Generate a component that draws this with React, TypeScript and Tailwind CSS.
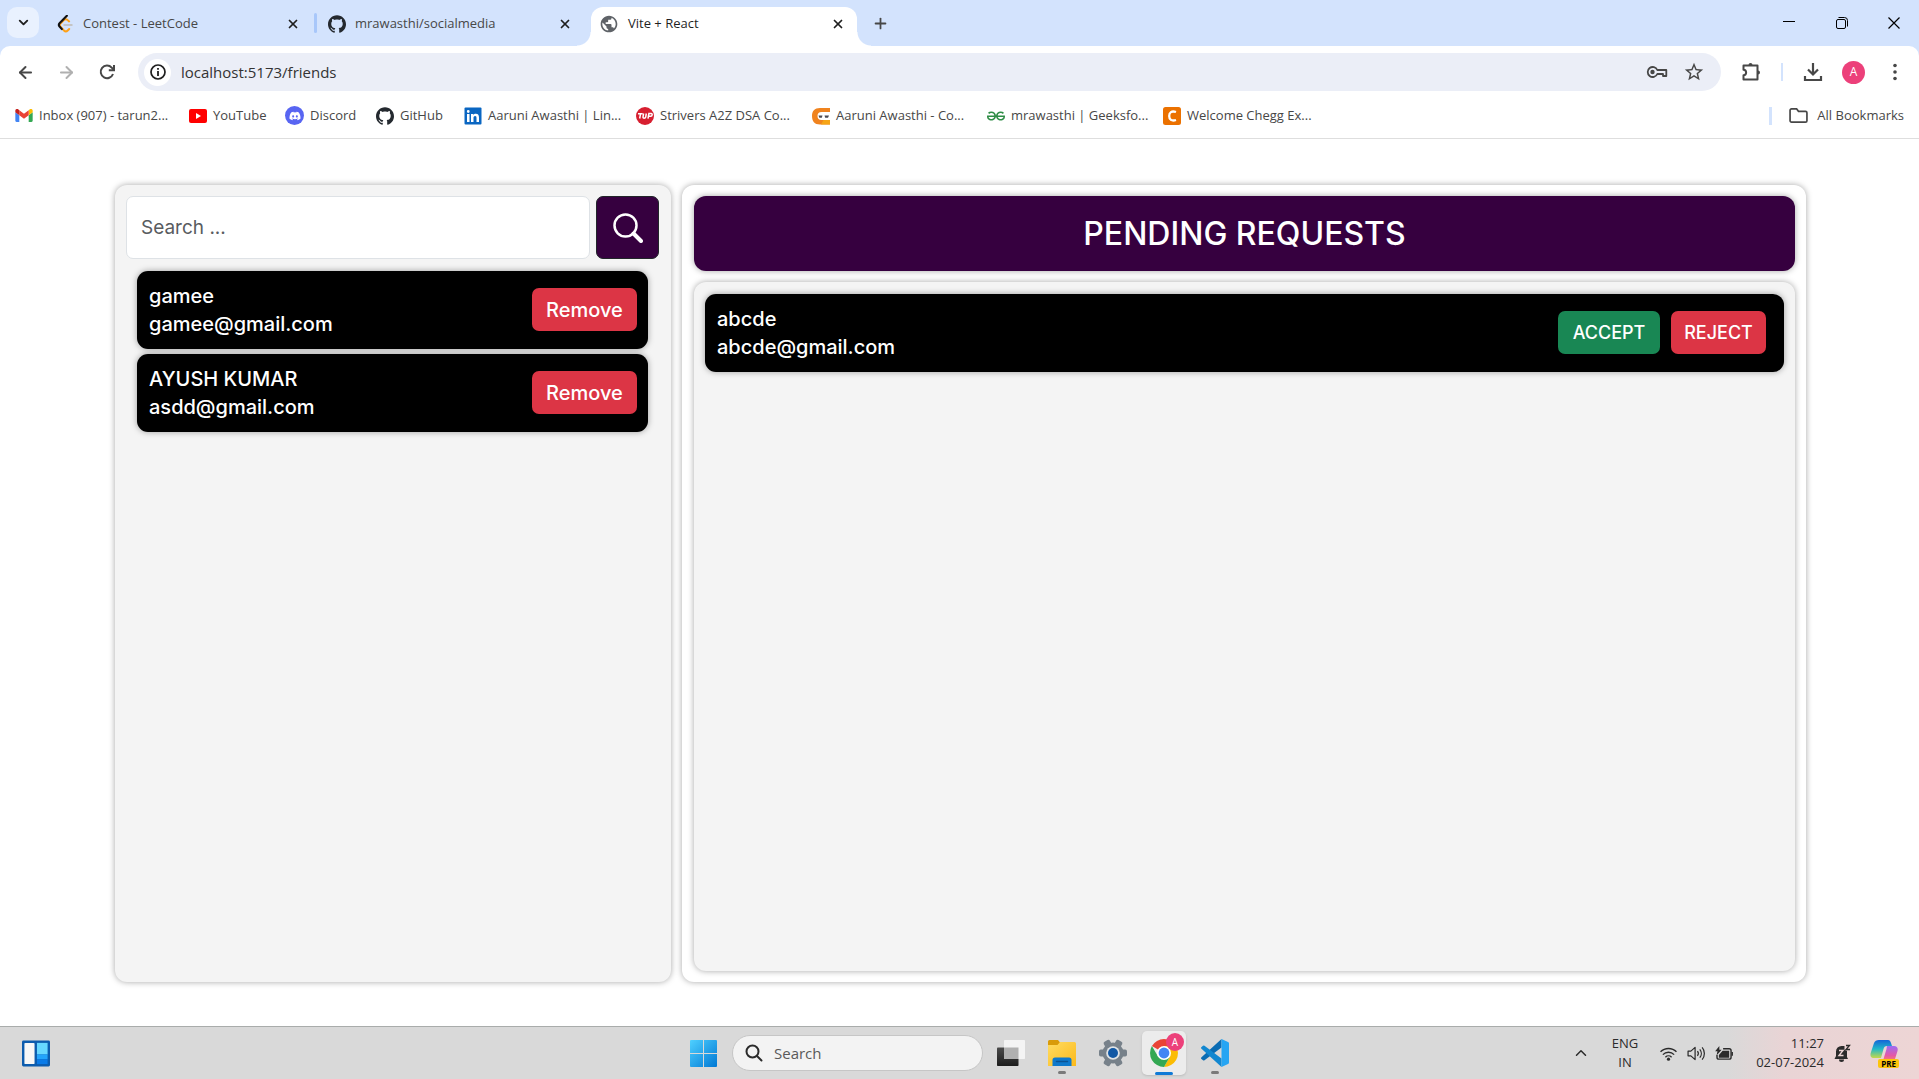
import type { ReactNode } from "react";
import { SiGithub, SiGeeksforgeeks } from "react-icons/si";
import { FaDiscord } from "react-icons/fa";
import { MdPublic, MdStarBorder } from "react-icons/md";
import { ArrowLeft, ArrowRight, ChevronDown, ChevronUp, Plus, X } from "lucide-react";

const uiFont = 'font-["Open_Sans","Noto_Sans",sans-serif]';

function LeetCodeIcon() {
  return (
    <svg viewBox="0 0 24 24" className="size-[18px]" aria-hidden="true">
      <path d="M17.5 8.6 15.600 6.800a3.600 3.600 0 0 0-5 0L6 11.400a3 3 0 0 0 0 4.200l4.600 5a3.600 3.600 0 0 0 5 0l2-2" fill="none" stroke="#ffa116" strokeWidth="2.600" strokeLinecap="round" />
      <path d="M14.500 1 5 10.800a3.600 3.600 0 0 0 0 5l2.800 3" fill="none" stroke="#111" strokeWidth="2.800" strokeLinecap="round" />
      <path d="M11 13.300h10" stroke="#c4c4c4" strokeWidth="2.600" strokeLinecap="round" />
    </svg>
  );
}

function GmailIcon() {
  return (
    <svg viewBox="0 0 24 18" className="h-[13px] w-[18px]" aria-hidden="true">
      <path d="M1.600 18H5.500V8.600L0 4.500v11.900C0 17.300.700 18 1.600 18z" fill="#4285f4" />
      <path d="M18.500 18h3.900c.9 0 1.600-.7 1.600-1.600V4.500l-5.500 4.100z" fill="#34a853" />
      <path d="M18.500 1.600v7L24 4.500V2.300c0-2-2.300-3.200-3.900-2z" fill="#fbbc04" />
      <path d="M5.500 8.600v-7L12 6.500l6.500-4.900v7L12 13.500z" fill="#ea4335" />
      <path d="M0 2.300v2.200l5.500 4.100v-7L3.900.4C2.300-.8 0 .3 0 2.300z" fill="#c5221f" />
    </svg>
  );
}

function YouTubeIcon() {
  return (
    <svg viewBox="0 0 18 14" className="h-[14px] w-[18px]" aria-hidden="true">
      <rect width="18" height="14" rx="2" fill="#f00" />
      <path d="M7 4v6l5-3z" fill="#fff" />
    </svg>
  );
}

function DiscordIcon() {
  return (
    <span className="flex size-[19px] items-center justify-center rounded-full bg-[#5865f2]">
      <FaDiscord className="size-[12px] text-white" />
    </span>
  );
}

function LinkedInIcon() {
  return (
    <svg viewBox="0 0 18 18" className="size-[18px]" aria-hidden="true">
      <rect x=".5" y=".5" width="17" height="17" rx="1" fill="#0a66c2" />
      <path d="M3 7h2.500v8H3zM4.250 3.100a1.400 1.400 0 1 1 0 2.800 1.400 1.400 0 0 1 0-2.800zM7 7h2.300v1.100C9.800 7.300 10.700 6.800 11.800 6.800c2.500 0 3.200 1.500 3.200 3.700V15h-2.500v-4c0-1.200-.2-2.100-1.400-2.100-1.300 0-1.600 1-1.600 2.100v4H7z" fill="#fff" />
    </svg>
  );
}

function TufIcon() {
  return (
    <svg viewBox="0 0 18 18" className="size-[18px]" aria-hidden="true">
      <circle cx="9" cy="9" r="9" fill="#d71f30" />
      <path d="M2 6.800h4.600M4.500 6.800 3.700 11.500M7.600 6.500 7 10c-.2 1.500 2.400 1.500 2.700 0l.6-3.500M12 11.700l.9-5.200h2.300c1.500 0 1.200 2.700-.4 2.700h-2" fill="none" stroke="#fff" strokeWidth="1.500" />
    </svg>
  );
}

function CodingNinjasIcon() {
  return (
    <svg viewBox="0 0 18 18" className="size-[18px]" aria-hidden="true">
      <path d="M18 1v4H9.500C7 5 5.500 6.500 5.500 9s1.500 4 4 4h8.500v4.500H8C2.500 17.500 0 14 0 9s2.500-8 8-8z" fill="#f0831e" />
      <path d="M18 13v4.500H9L11.500 13z" fill="#f6a516" />
      <path d="M6.500 8.500h4l-.7 2.200H7.300zM12.500 8.500H17l-1 2.200h-2.800z" fill="#4b4b55" />
    </svg>
  );
}

function CheggIcon() {
  return (
    <svg viewBox="0 0 18 18" className="size-[18px]" aria-hidden="true">
      <rect width="18" height="18" rx="2.500" fill="#eb7100" />
      <path d="M13 5C8.500 3.500 6.200 5.500 6.200 9s2.300 5.500 6.800 4" fill="none" stroke="#fff" strokeWidth="2.300" />
    </svg>
  );
}

type Bookmark = { label: string; icon: ReactNode; width: string };

const bookmarks: Bookmark[] = [
  { label: "Inbox (907) - tarun2...", icon: <GmailIcon />, width: "w-[174px]" },
  { label: "YouTube", icon: <YouTubeIcon />, width: "w-[96px]" },
  { label: "Discord", icon: <DiscordIcon />, width: "w-[91px]" },
  { label: "GitHub", icon: <SiGithub className="size-[18px] text-[#24292f]" />, width: "w-[88px]" },
  { label: "Aaruni Awasthi | Lin...", icon: <LinkedInIcon />, width: "w-[172px]" },
  { label: "Strivers A2Z DSA Co...", icon: <TufIcon />, width: "w-[176px]" },
  { label: "Aaruni Awasthi - Co...", icon: <CodingNinjasIcon />, width: "w-[175px]" },
  { label: "mrawasthi | Geeksfo...", icon: <SiGeeksforgeeks className="size-[18px] text-[#2f8d46]" />, width: "w-[176px]" },
  { label: "Welcome Chegg Ex...", icon: <CheggIcon />, width: "w-[175px]" },
];

function Tab({ title, icon, active = false }: { title: string; icon: ReactNode; active?: boolean }) {
  return (
    <div
      className={
        active
          ? "relative flex h-[39px] w-[266px] items-center rounded-t-[12px] bg-white pr-[12px] pb-[6px] pl-[8px]"
          : "flex h-[39px] w-[244px] items-center pb-[6px]"
      }
    >
      {active && (
        <>
          <span className="absolute bottom-0 -left-[14px] size-[14px] bg-[radial-gradient(circle_at_0_0,transparent_13px,white_14px)]" />
          <span className="absolute -right-[14px] bottom-0 size-[14px] bg-[radial-gradient(circle_at_100%_0,transparent_13px,white_14px)]" />
        </>
      )}
      {icon}
      <span className={active ? "ml-[9px] flex-1 text-[13px] text-[#1f1f1f]" : "ml-[9px] flex-1 text-[13px] text-[#474747]"}>{title}</span>
      <button type="button" aria-label={`Close ${title}`} className="flex size-[14px] items-center justify-center text-[#1f1f1f]">
        <X className="size-[14px]" strokeWidth={3} />
      </button>
    </div>
  );
}

function TabStrip() {
  return (
    <header className="flex h-[46px] items-end bg-[#d3e3fd] pl-[7px]">
      <button type="button" aria-label="Search tabs" className="mb-[8px] flex h-[31px] w-[32px] items-center justify-center rounded-[10px] bg-[#e9f1fe] text-[#1f1f1f]">
        <ChevronDown className="size-[15px]" strokeWidth={3} />
      </button>
      <div className="ml-[17px] flex w-[535px] items-end">
        <div className="flex w-[272px] items-center">
          <Tab title="Contest - LeetCode" icon={<LeetCodeIcon />} />
          <span className="mr-[11px] mb-[7px] ml-auto h-[20px] w-[3px] rounded bg-[#a8c7fa]" />
        </div>
        <Tab title="mrawasthi/socialmedia" icon={<SiGithub className="size-[18px] text-[#24292f]" />} />
      </div>
      <Tab title="Vite + React" icon={<MdPublic className="size-[20px] text-[#5f6368]" />} active />
      <button type="button" aria-label="New tab" className="mb-[14px] ml-[15px] text-[#474747]">
        <Plus className="size-[17px]" strokeWidth={2.500} />
      </button>
      <div className="mb-[8px] ml-auto flex text-black">
        <button type="button" aria-label="Minimize" className="flex h-[30px] w-[53px] items-center justify-center">
          <svg viewBox="0 0 12 12" className="size-[12px]"><path d="M0 4.500h12" stroke="currentColor" /></svg>
        </button>
        <button type="button" aria-label="Restore" className="flex h-[30px] w-[53px] items-center justify-center">
          <svg viewBox="0 0 12 12" className="size-[12px]" fill="none" stroke="currentColor"><rect x=".5" y="2.500" width="9" height="9" rx="1.500" /><path d="M2.500.5h6a3 3 0 0 1 3 3v6" /></svg>
        </button>
        <button type="button" aria-label="Close window" className="flex h-[30px] w-[51px] items-center justify-center">
          <svg viewBox="0 0 12 12" className="size-[12px]"><path d="m.5.5 11 11m0-11-11 11" stroke="currentColor" strokeWidth="1.200" /></svg>
        </button>
      </div>
    </header>
  );
}

function Toolbar() {
  return (
    <div className="bg-[#d3e3fd]">
      <div className="flex h-[52px] items-center rounded-t-[10px] bg-white pr-[15px] pl-[16px] text-[#474747]">
        <button type="button" aria-label="Back" className="w-[41px]"><ArrowLeft className="size-[19px]" strokeWidth={2.500} /></button>
        <button type="button" aria-label="Forward" className="w-[41px] text-[#b0b0b0]"><ArrowRight className="size-[19px]" strokeWidth={2.500} /></button>
        <button type="button" aria-label="Reload" className="w-[40px]">
          <svg viewBox="0 0 18 18" className="size-[18px]" fill="none" stroke="currentColor" strokeWidth="2"><path d="M15 11a6.300 6.300 0 1 1-1.300-6.400L16 7" /><path d="M16 2v5.300h-5.200" /></svg>
        </button>
        <div className="flex h-[38px] flex-1 items-center rounded-full bg-[#ebeef7] pr-[16px] pl-[6px]">
          <button type="button" aria-label="View site information" className="flex size-[27px] items-center justify-center rounded-full bg-white text-[#1f1f1f]">
            <svg viewBox="0 0 16 16" className="size-[16px]" fill="none" stroke="currentColor" strokeWidth="1.700"><circle cx="8" cy="8" r="7" /><path d="M8 7v5M8 4v1.800" strokeWidth="1.800" /></svg>
          </button>
          <input aria-label="Address" defaultValue="localhost:5173/friends" className="ml-[10px] min-w-0 flex-1 bg-transparent text-[15px] text-[#333] outline-none" />
          <button type="button" aria-label="Passwords">
            <svg viewBox="0 0 22 14" className="h-[14px] w-[22px]" fill="none" stroke="currentColor" strokeWidth="1.800"><path d="M11.300 5h9v6h-3.300V9h-5.700A5 5 0 1 1 11.300 5z" strokeLinejoin="round" /><circle cx="6.500" cy="7" r="2.200" fill="currentColor" stroke="none" /></svg>
          </button>
          <button type="button" aria-label="Bookmark this page" className="ml-[15px]"><MdStarBorder className="size-[22px]" /></button>
        </div>
        <button type="button" aria-label="Extensions" className="ml-[19px]">
          <svg viewBox="0 0 22 22" className="size-[22px]" fill="none" stroke="currentColor" strokeWidth="2"><path d="M3.500 4.500h14v14h-14v-4.200c3.500-.2 3.500-5.400 0-5.600z" strokeLinejoin="round" /><path d="M8.500 4a2 2 0 0 1 4 0zM18 9.500a2 2 0 0 1 0 4z" fill="currentColor" stroke="none" /></svg>
        </button>
        <span className="ml-[19px] h-[18px] w-[2px] bg-[#d3e3fd]" />
        <button type="button" aria-label="Downloads" className="ml-[20px]">
          <svg viewBox="0 0 20 20" className="size-[20px]" fill="none" stroke="currentColor" strokeWidth="2.200"><path d="M10 1v11M5 7.500l5 5 5-5M2 14v4h16v-4" /></svg>
        </button>
        <button type="button" aria-label="Profile" className="ml-[19px] flex size-[23px] items-center justify-center rounded-full bg-[#ec407a] text-[12px] text-white">A</button>
        <button type="button" aria-label="Menu" className="ml-[21px]">
          <svg viewBox="0 0 18 18" className="size-[18px]" fill="currentColor"><circle cx="9" cy="2.500" r="1.800" /><circle cx="9" cy="9" r="1.800" /><circle cx="9" cy="15.500" r="1.800" /></svg>
        </button>
      </div>
    </div>
  );
}

function BookmarksBar() {
  return (
    <nav aria-label="Bookmarks" className="flex h-[41px] items-center border-b border-[#dedede] bg-white pr-[15px] pb-[5px] pl-[15px] text-[13px] text-[#474747]">
      {bookmarks.map((b) => (
        <a key={b.label} href="#" className={`flex items-center gap-[6px] whitespace-nowrap ${b.width}`}>
          {b.icon}
          {b.label}
        </a>
      ))}
      <span className="mr-[17px] ml-auto h-[18px] w-[3px] bg-[#d3e3fd]" />
      <a href="#" className="flex items-center gap-[9px]">
        <svg viewBox="0 0 20 16" className="h-[15px] w-[19px]" fill="none" stroke="currentColor" strokeWidth="1.800"><path d="M1 2.500A1.500 1.500 0 0 1 2.500 1H8l2 2.500h7.500A1.500 1.500 0 0 1 19 5v8.500a1.500 1.500 0 0 1-1.500 1.500h-15A1.500 1.500 0 0 1 1 13.500z" /></svg>
        All Bookmarks
      </a>
    </nav>
  );
}

const panelShadow = "shadow-[0_0_6px_rgba(0,0,0,0.35)]";

function PersonCard({ name, email, children }: { name: string; email: string; children: ReactNode }) {
  return (
    <li className={`flex h-[78px] items-center justify-between rounded-[11px] bg-black pb-[1px] pl-[12px] ${panelShadow}`}>
      <div className="text-[20px] leading-[28px] font-medium text-white">
        <p>{name}</p>
        <p>{email}</p>
      </div>
      {children}
    </li>
  );
}

const friends = [
  { name: "gamee", email: "gamee@gmail.com" },
  { name: "AYUSH KUMAR", email: "asdd@gmail.com" },
];

function FriendsPage() {
  return (
    <main className='grid flex-1 grid-cols-[556fr_1124fr] gap-[11px] bg-white pt-[46px] pr-[113px] pb-[44px] pl-[115px] font-["Inter",sans-serif]'>
      <section className={`rounded-[12px] bg-[#f4f4f4] py-[11px] pr-[12px] pl-[11px] ${panelShadow}`}>
        <form className="flex gap-[6px]">
          <input aria-label="Search friends" placeholder="Search ..." className="h-[63px] min-w-0 flex-1 rounded-[7px] border border-[#dee2e6] bg-white px-[14px] text-[19px] outline-none placeholder:text-[#595c5f]" />
          <button type="button" aria-label="Search" className="flex size-[63px] items-center justify-center rounded-[7px] border border-[#212529] bg-[#36003f]">
            <svg viewBox="0 0 30 30" className="size-[30px]" fill="none" stroke="#fff"><circle cx="12.500" cy="12.500" r="11" strokeWidth="2.500" /><path d="m20.500 20.500 7.500 7.500" strokeWidth="4" strokeLinecap="round" /></svg>
          </button>
        </form>
        <ul className="mt-[12px] flex flex-col gap-[5px] px-[11px]">
          {friends.map((f) => (
            <PersonCard key={f.email} name={f.name} email={f.email}>
              <button type="button" className="mr-[11px] h-[43px] w-[105px] rounded-[7px] bg-[#dc3545] text-[20px] font-medium text-white">Remove</button>
            </PersonCard>
          ))}
        </ul>
      </section>
      <section className={`flex flex-col gap-[11px] rounded-[12px] bg-white py-[11px] pr-[11px] pl-[12px] ${panelShadow}`}>
        <h1 className={`flex h-[75px] items-center justify-center rounded-[12px] bg-[#36003f] text-[32px] font-medium text-white ${panelShadow}`}>PENDING REQUESTS</h1>
        <ul className={`flex-1 rounded-[12px] bg-[#f4f4f4] px-[11px] pt-[12px] ${panelShadow}`}>
          <PersonCard name="abcde" email="abcde@gmail.com">
            <div className="mr-[18px] flex gap-[11px] text-[18px] font-medium text-white">
              <button type="button" className="h-[43px] w-[102px] rounded-[7px] bg-[#198754]">ACCEPT</button>
              <button type="button" className="h-[43px] w-[95px] rounded-[7px] bg-[#dc3545]">REJECT</button>
            </div>
          </PersonCard>
        </ul>
      </section>
    </main>
  );
}

function ChromeLogo() {
  return (
    <svg viewBox="0 0 28 28" className="size-[28px]" aria-hidden="true">
      <path d="M14 14 1.900 7A14 14 0 0 1 26.100 7z" fill="#ea4335" />
      <path d="M14 14V7h12.100A14 14 0 0 1 14 28l6-10.500z" fill="#fbbc04" />
      <path d="M1.900 7A14 14 0 0 0 14 28l6-10.500L14 14l-6 3.500z" fill="#34a853" />
      <circle cx="14" cy="14" r="7" fill="#fff" />
      <circle cx="14" cy="14" r="5.400" fill="#4285f4" />
    </svg>
  );
}

function SettingsGear() {
  return (
    <svg viewBox="0 0 28 28" className="size-[28px]" aria-hidden="true">
      <g fill="#77818a">
        <circle cx="14" cy="14" r="10.500" />
        <rect x="10.500" y="0" width="7" height="28" rx="1.800" transform="rotate(30 14 14)" />
        <rect x="10.500" y="0" width="7" height="28" rx="1.800" transform="rotate(90 14 14)" />
        <rect x="10.500" y="0" width="7" height="28" rx="1.800" transform="rotate(150 14 14)" />
      </g>
      <circle cx="14" cy="14" r="6.800" fill="#dfe3e6" />
      <circle cx="14" cy="14" r="5" fill="#1158a5" />
    </svg>
  );
}

function Taskbar() {
  return (
    <footer className="grid h-[53px] grid-cols-[1fr_auto_1fr] items-center border-t border-[#a9acab] bg-[linear-gradient(90deg,#d9d9d9_90%,#e9d4d5_93%,#edd5d5_100%)] text-[#2b2b2b]">
      <button type="button" aria-label="Widgets" className="ml-[22px] justify-self-start">
        <svg viewBox="0 0 29 27" className="h-[27px] w-[28px]">
          <rect width="29" height="27" rx="1.500" fill="#0c5cae" />
          <rect x="2.500" y="2.500" width="10.500" height="22" rx="1" fill="#f7f7f7" />
          <rect x="15.500" y="2.500" width="11" height="12" fill="#67d8ff" />
          <rect x="15.500" y="14.500" width="11" height="5" fill="#23a4fb" />
          <rect x="15.500" y="19.500" width="11" height="5" fill="#0a7be8" />
        </svg>
      </button>
      <div className="flex items-center">
        <button type="button" aria-label="Start">
          <svg viewBox="0 0 27 27" className="size-[27px]">
            <defs><linearGradient id="win" x2="1" y2="1"><stop stopColor="#4fd0ff" /><stop offset="1" stopColor="#0078d4" /></linearGradient></defs>
            <path d="M0 1a1 1 0 0 1 1-1h12v13H0zM14 0h12a1 1 0 0 1 1 1v12H14zM0 14h13v13H1a1 1 0 0 1-1-1zM14 14h13v12a1 1 0 0 1-1 1H14z" fill="url(#win)" />
          </svg>
        </button>
        <label className="ml-[15px] flex h-[36px] w-[251px] items-center rounded-full border border-[#c6c6c6] bg-[#f3f3f3] pl-[12px]">
          <svg viewBox="0 0 18 18" className="size-[18px] shrink-0" fill="none" stroke="#2b2b2b" strokeWidth="2"><circle cx="7.500" cy="7.500" r="6" /><path d="m12 12 4.500 4.500" strokeLinecap="round" /></svg>
          <input aria-label="Search Windows" placeholder="Search" className="ml-[11px] w-full min-w-0 bg-transparent text-[15px] outline-none placeholder:text-[#5a5a5a]" />
        </label>
        <button type="button" aria-label="Task view" className="ml-[14px]">
          <svg viewBox="0 0 28 28" className="size-[28px]">
            <defs><linearGradient id="tv" x2="0" y2="1"><stop stopColor="#4a4a4a" /><stop offset="1" stopColor="#1c1c1c" /></linearGradient></defs>
            <rect x="0" y="8.500" width="21.500" height="18.500" rx=".8" fill="url(#tv)" />
            <rect x="7" y="1" width="21" height="19" rx=".8" fill="#f4f4f4" />
            <path d="M7 8.500h14.500V20H7z" fill="#b0b0b0" />
          </svg>
        </button>
        <button type="button" aria-label="File Explorer" className="relative ml-[23px]">
          <svg viewBox="0 0 28 28" className="size-[28px]">
            <defs><linearGradient id="fe" x2="1" y2="1"><stop stopColor="#ffdc62" /><stop offset="1" stopColor="#fbb91b" /></linearGradient></defs>
            <path d="M0 2.500A1.500 1.500 0 0 1 1.500 1H10l2 2.500V8H0z" fill="#d99b09" />
            <path d="M0 6h9.500L12 3h14.500A1.500 1.500 0 0 1 28 4.500V27H0z" fill="url(#fe)" />
            <path d="M4.500 27v-6A2.500 2.500 0 0 1 7 18.500h14a2.500 2.500 0 0 1 2.500 2.500v6z" fill="#0f79cc" />
            <path d="M8.500 22.500h11" stroke="#0b5394" strokeWidth="1.500" strokeLinecap="round" />
          </svg>
          <span className="absolute -bottom-[7px] left-[10px] h-[3px] w-[8px] rounded-full bg-[#7a7a7a]" />
        </button>
        <button type="button" aria-label="Settings" className="ml-[23px]">
          <SettingsGear />
        </button>
        <button type="button" aria-label="Google Chrome" className="relative ml-[15px] flex size-[44px] items-center justify-center rounded-[5px] bg-[#ececec] shadow-sm">
          <ChromeLogo />
          <span className="absolute top-[2px] right-[2px] flex size-[18px] items-center justify-center rounded-full bg-[#ec407a] text-[10px] text-white">A</span>
          <span className="absolute bottom-0 left-[13px] h-[3px] w-[18px] rounded-full bg-[#0f7ad6]" />
        </button>
        <button type="button" aria-label="Visual Studio Code" className="relative ml-[15px]">
          <svg viewBox="0 0 28 28" className="size-[28px]">
            <path d="M20.500 0v8.500L3.500 21.300a1.200 1.200 0 0 1-1.500 0L.5 20a1.200 1.200 0 0 1 0-1.800z" fill="#0b6cb3" />
            <path d="M20.500 28v-8.500L3.500 6.700a1.200 1.200 0 0 0-1.500 0L.5 8a1.200 1.200 0 0 0 0 1.800z" fill="#1287d0" />
            <path d="m20.500 0 6.500 3a1.500 1.500 0 0 1 1 1.400v19.200a1.500 1.500 0 0 1-1 1.400l-6.500 3z" fill="#26a5f3" />
          </svg>
          <span className="absolute -bottom-[7px] left-[10px] h-[3px] w-[8px] rounded-full bg-[#7a7a7a]" />
        </button>
      </div>
      <div className="flex items-center justify-self-end pr-[21px]">
        <button type="button" aria-label="Show hidden icons"><ChevronUp className="size-[18px]" strokeWidth={2} /></button>
        <button type="button" className="ml-[16px] w-[38px] text-center text-[13px] leading-[19px]">ENG<br />IN</button>
        <button type="button" aria-label="Network, sound and battery" className="ml-[15px] flex items-center gap-[9px]">
          <svg viewBox="0 0 20 16" className="h-[15px] w-[19px]" fill="none" stroke="currentColor" strokeWidth="1.500"><path d="M1.500 6.200a12 12 0 0 1 17 0M4 9.200a8.500 8.500 0 0 1 12 0M6.700 11.900a4.700 4.700 0 0 1 6.600 0" /><circle cx="10" cy="14" r="1.700" fill="currentColor" stroke="none" /></svg>
          <svg viewBox="0 0 20 16" className="h-[15px] w-[19px]" fill="none" stroke="currentColor" strokeWidth="1.300"><path d="M1 5.500h3L8.500 1.500v13L4 10.500H1zM11 5.500a4 4 0 0 1 0 5M13.500 3.500a7 7 0 0 1 0 9M16 1.500a10 10 0 0 1 0 13" strokeLinejoin="round" /></svg>
          <svg viewBox="0 0 20 16" className="h-[15px] w-[19px]"><path d="M8.500 3H15a2 2 0 0 1 2 2v7a2 2 0 0 1-2 2H4a2 2 0 0 1-2-2V9.500" fill="none" stroke="currentColor" strokeWidth="1.500" /><path d="M8 5h7v7.500H4V9.500zM17.500 6.500H19v4h-1.500z" fill="currentColor" /><path d="M4.500 0 0 5.500h2.500L1.500 10 7 4H4.500z" fill="currentColor" /></svg>
        </button>
        <button type="button" className="ml-[8px] w-[82px] text-right text-[13px] leading-[19px] whitespace-nowrap">11:27<br />02-07-2024</button>
        <button type="button" aria-label="Notifications" className="ml-[10px]">
          <svg viewBox="0 0 17 18" className="h-[18px] w-[17px]">
            <path d="M2 7.500A5.500 5.500 0 0 1 7.500 2H13v11l1 2H.5L2 12z" fill="currentColor" />
            <path d="M5 15.500h5a2.500 2.500 0 0 1-5 0z" fill="currentColor" />
            <path d="M10.500 0H17v7h-3.500l-3-1z" fill="#edd5d5" />
            <path d="M5 6.500h4l-4 5h4.500" fill="none" stroke="#edd5d5" strokeWidth="1.400" />
            <path d="M12 1.500h3.500l-3.500 4h4" fill="none" stroke="currentColor" strokeWidth="1.300" />
          </svg>
        </button>
        <button type="button" aria-label="Copilot preview" className="relative ml-[19px]">
          <svg viewBox="0 0 28 28" className="size-[28px]">
            <defs>
              <linearGradient id="cpA" x2="0" y2="1"><stop stopColor="#1464d8" /><stop offset=".5" stopColor="#22b8c8" /><stop offset="1" stopColor="#c5d94a" /></linearGradient>
              <linearGradient id="cpB" x2="0" y2="1"><stop stopColor="#9a6cf5" /><stop offset=".6" stopColor="#e658a5" /><stop offset="1" stopColor="#fb8b5c" /></linearGradient>
            </defs>
            <path d="M9 1h9c2 0 2.500 1.500 3 3l1 3h-5c-2 0-3 1-3.500 3L11 19H4c-3 0-4-2-3.300-5L4 4c.8-2 2.500-3 5-3z" fill="url(#cpA)" />
            <path d="M17 7h7c3 0 4.300 2 3.500 5l-2.500 8c-.5 2-2 3-4 3H10c2 0 3-1 3.500-3l3-10c.3-1 .2-2 .5-3z" fill="url(#cpB)" />
          </svg>
          <span className="absolute -right-[1px] -bottom-[1px] rounded-[2px] bg-[#fcc50c] px-[3px] text-[8px] leading-[9px] font-bold text-black">PRE</span>
        </button>
      </div>
    </footer>
  );
}

export default function App() {
  return (
    <div className={`flex min-h-screen flex-col ${uiFont}`}>
      <TabStrip />
      <Toolbar />
      <BookmarksBar />
      <FriendsPage />
      <Taskbar />
    </div>
  );
}
